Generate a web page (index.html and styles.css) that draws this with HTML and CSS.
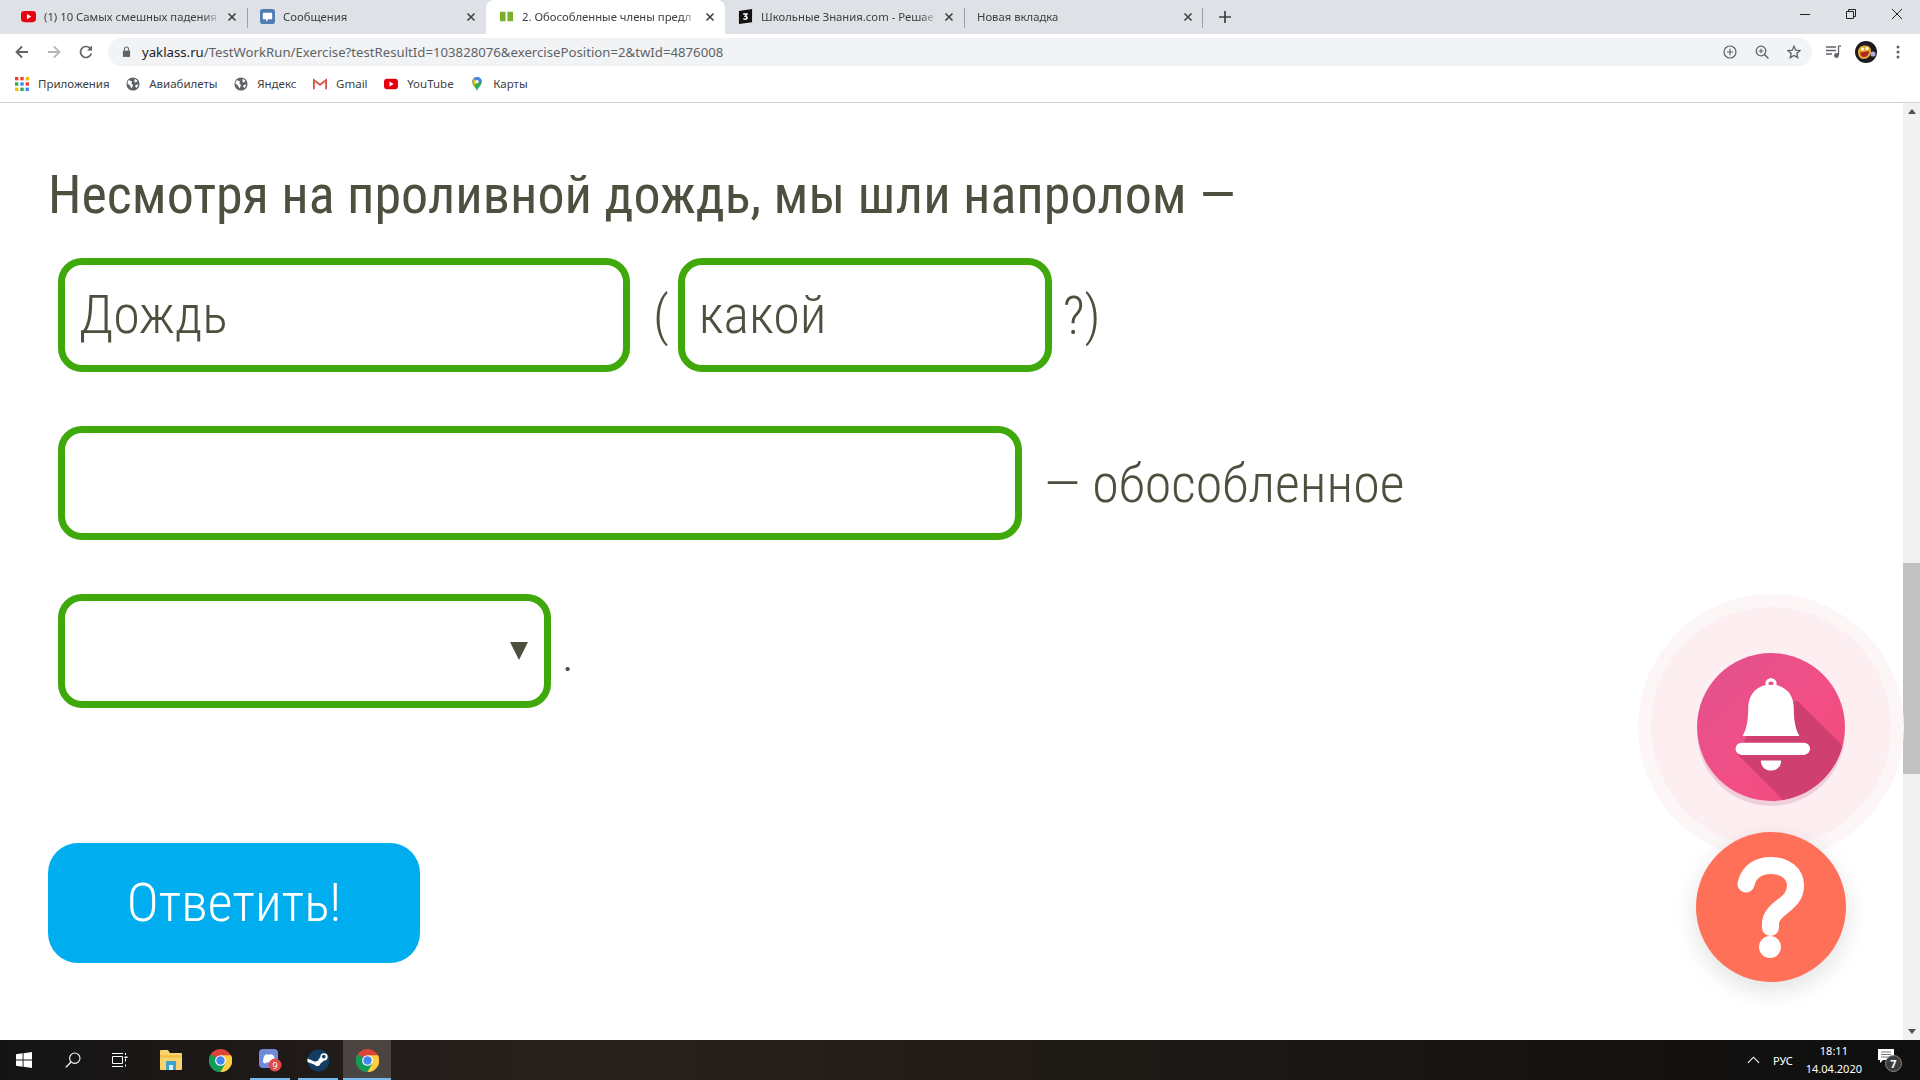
FILE: index.html
```html
<!DOCTYPE html>
<html>
<head>
  <title>Обособленные члены предложения</title>
  <link rel="stylesheet" href="styles.css">
</head>
<body>
  <svg class="defs" width="0" height="0">
    <symbol id="chrome" viewBox="0 0 24 24">
      <circle cx="12" cy="12" r="12" fill="#db4437"/>
      <path d="M12 12 1.6 18A12 12 0 0 1 2 5.4Z" fill="#0f9d58"/>
      <path d="M12 12 22.4 18A12 12 0 0 1 1.6 18L6 10Z" fill="#0f9d58"/>
      <path d="M12 6.5H23A12 12 0 0 1 12 24L17 15Z" fill="#ffcd40"/>
      <circle cx="12" cy="12" r="5.6" fill="#fff"/>
      <circle cx="12" cy="12" r="4.4" fill="#4285f4"/>
    </symbol>
    <symbol id="globe" viewBox="0 0 16 16">
      <circle cx="8" cy="8" r="7.5" fill="#5f6368"/>
      <path d="M3 3.5 7 5 6 7 8 9 6.5 13 4 9 1.5 7.5ZM10 2l3 2-1.500 2.500L9.500 5ZM11 9l3.500-.5-2.500 4L10.500 11Z" fill="#fff"/>
    </symbol>
    <symbol id="yt" viewBox="0 0 16 16">
      <rect x="0" y="2" width="16" height="12" rx="3.500" fill="#e60012"/>
      <path d="M6.300 5.200 11 8l-4.700 2.800Z" fill="#fff"/>
    </symbol>
    <symbol id="x" viewBox="0 0 10 10">
      <path d="M1.500 1.500l7 7M8.500 1.500l-7 7" stroke="#3c4043" stroke-width="1.600"/>
    </symbol>
  </svg>

  <div class="tabstrip">
    <div class="tab">
      <svg class="fav" viewBox="0 0 16 16"><use href="#yt"/></svg>
      <span class="tab-title">(1) 10 Самых смешных падения</span>
      <svg class="tab-close" viewBox="0 0 10 10"><use href="#x"/></svg>
    </div>
    <div class="tab sep">
      <svg class="fav" viewBox="0 0 16 16"><rect width="16" height="16" rx="3" fill="#4f7db4"/><path d="M4 4h8a1 1 0 0 1 1 1v5a1 1 0 0 1-1 1H9l-2.500 2.500V11H4a1 1 0 0 1-1-1V5a1 1 0 0 1 1-1Z" fill="#fff"/></svg>
      <span class="tab-title">Сообщения</span>
      <svg class="tab-close" viewBox="0 0 10 10"><use href="#x"/></svg>
    </div>
    <div class="tab active">
      <svg class="fav" viewBox="0 0 16 16"><path d="M1 3h6v10H1ZM9 3h6v10H9Z" fill="#7cb02c"/></svg>
      <span class="tab-title">2. Обособленные члены предл</span>
      <svg class="tab-close" viewBox="0 0 10 10"><use href="#x"/></svg>
    </div>
    <div class="tab">
      <svg class="fav" viewBox="0 0 16 16"><path d="M1 2 15 0v14L1 16Z" fill="#111"/><path d="M5.500 4.500h4.800v1.500L8.600 7.400c1.200.2 1.900.9 1.900 2 0 1.500-1.300 2.300-2.700 2.300-1 0-1.800-.3-2.500-.8l.7-1.300c.5.400 1.100.6 1.700.6.600 0 1-.3 1-.8s-.5-.8-1.200-.8H6.700V7.400l1.500-1.400H5.500Z" fill="#fff"/></svg>
      <span class="tab-title">Школьные Знания.com - Решае</span>
      <svg class="tab-close" viewBox="0 0 10 10"><use href="#x"/></svg>
    </div>
    <div class="tab sep last">
      <span class="tab-title">Новая вкладка</span>
      <svg class="tab-close" viewBox="0 0 10 10"><use href="#x"/></svg>
    </div>
    <svg class="newtab" viewBox="0 0 12 12"><path d="M6 0v12M0 6h12" stroke="#3c4043" stroke-width="1.700"/></svg>
    <div class="winctl">
      <svg viewBox="0 0 12 12"><path d="M1 6.500h10" stroke="#222" stroke-width="1"/></svg>
      <svg viewBox="0 0 12 12"><path d="M3.500 3V1.500h7v7H9M1.500 3.500h7v7h-7Z" fill="none" stroke="#222" stroke-width="1"/></svg>
      <svg viewBox="0 0 12 12"><path d="M1 1l10 10M11 1 1 11" stroke="#222" stroke-width="1"/></svg>
    </div>
  </div>

  <div class="toolbar">
    <svg class="nav-icon" viewBox="0 0 16 16"><path d="M14 8H3M8 2.500 2.500 8 8 13.500" fill="none" stroke="#5f6368" stroke-width="1.800"/></svg>
    <svg class="nav-icon" viewBox="0 0 16 16"><path d="M2 8h11M8 2.500 13.500 8 8 13.500" fill="none" stroke="#b4b7bb" stroke-width="1.800"/></svg>
    <svg class="nav-icon" viewBox="0 0 16 16"><path d="M13.300 9.500A5.500 5.500 0 1 1 12 4.200" fill="none" stroke="#5f6368" stroke-width="1.700"/><path d="M14 1.500V6.500H9Z" fill="#5f6368"/></svg>
    <div class="omnibox">
      <svg class="lock" viewBox="0 0 10 12"><path d="M1 5h8v7H1Z" fill="#5f6368"/><path d="M2.800 5V3.200a2.200 2.200 0 0 1 4.400 0V5" fill="none" stroke="#5f6368" stroke-width="1.200"/></svg>
      <span class="url"><b>yaklass.ru</b>/TestWorkRun/Exercise?testResultId=103828076&amp;exercisePosition=2&amp;twId=4876008</span>
      <div class="omni-icons">
        <svg viewBox="0 0 14 14"><circle cx="7" cy="7" r="6" fill="none" stroke="#5f6368" stroke-width="1.200"/><path d="M7 3.800v6.400M3.800 7h6.400" stroke="#5f6368" stroke-width="1.200"/></svg>
        <svg viewBox="0 0 14 14"><circle cx="6" cy="6" r="4.800" fill="none" stroke="#5f6368" stroke-width="1.300"/><path d="M9.500 9.500 13.500 13.500" stroke="#5f6368" stroke-width="1.500"/><path d="M6 3.700v4.600M3.700 6h4.600" stroke="#5f6368" stroke-width="1.100"/></svg>
        <svg viewBox="0 0 14 14"><path d="M7 1.300 8.700 5.200 13 5.600 9.800 8.400 10.700 12.600 7 10.400 3.300 12.600 4.200 8.400 1 5.600 5.300 5.200Z" fill="none" stroke="#5f6368" stroke-width="1.300"/></svg>
      </div>
    </div>
    <svg class="media" viewBox="0 0 16 14"><path d="M0 2h10M0 5.500h10M0 9h6" stroke="#5f6368" stroke-width="1.300"/><path d="M12.500 1v9" stroke="#5f6368" stroke-width="1.300"/><path d="M12.500 1H15" stroke="#5f6368" stroke-width="1.300"/><circle cx="10.500" cy="10.500" r="2.400" fill="#5f6368"/></svg>
    <svg class="avatar" viewBox="0 0 22 22">
      <circle cx="11" cy="11" r="11" fill="#1d1a24"/>
      <path d="M3 11C3 6 7 4 11 4.500 15 5 16.500 8 16 11 15.500 15 13 18 8.500 18 5 18 3 15 3 11Z" fill="#e3a92a"/>
      <path d="M5 11.500 14 10C14 14 11.500 16 8.500 16 6.500 16 5.500 14 5 11.500Z" fill="#b0281e"/>
      <circle cx="7.500" cy="8" r="1.500" fill="#fff"/><circle cx="12" cy="7.500" r="1.500" fill="#fff"/>
      <circle cx="18" cy="13" r="2.600" fill="#b9a8d8"/>
    </svg>
    <svg class="dots" viewBox="0 0 4 14"><circle cx="2" cy="2" r="1.500" fill="#5f6368"/><circle cx="2" cy="7" r="1.500" fill="#5f6368"/><circle cx="2" cy="12" r="1.500" fill="#5f6368"/></svg>
  </div>

  <div class="bookmarks">
    <div class="bm">
      <svg class="bm-icon" viewBox="0 0 14 14">
        <rect x="0" y="0" width="3.400" height="3.400" fill="#ea4335"/><rect x="5.300" y="0" width="3.400" height="3.400" fill="#ea4335"/><rect x="10.600" y="0" width="3.400" height="3.400" fill="#fbbc05"/>
        <rect x="0" y="5.300" width="3.400" height="3.400" fill="#34a853"/><rect x="5.300" y="5.300" width="3.400" height="3.400" fill="#4285f4"/><rect x="10.600" y="5.300" width="3.400" height="3.400" fill="#ea4335"/>
        <rect x="0" y="10.600" width="3.400" height="3.400" fill="#fbbc05"/><rect x="5.300" y="10.600" width="3.400" height="3.400" fill="#34a853"/><rect x="10.600" y="10.600" width="3.400" height="3.400" fill="#4285f4"/>
      </svg>
      Приложения
    </div>
    <div class="bm"><svg class="bm-icon" viewBox="0 0 16 16"><use href="#globe"/></svg>Авиабилеты</div>
    <div class="bm"><svg class="bm-icon" viewBox="0 0 16 16"><use href="#globe"/></svg>Яндекс</div>
    <div class="bm"><svg class="bm-icon" viewBox="0 0 16 12"><path d="M1 12V1.500L8 7l7-5.500V12" fill="none" stroke="#d4574a" stroke-width="2.200"/></svg>Gmail</div>
    <div class="bm"><svg class="bm-icon" viewBox="0 0 16 16"><use href="#yt"/></svg>YouTube</div>
    <div class="bm"><svg class="bm-icon" viewBox="0 0 12 16"><path d="M6 0a5.500 5.500 0 0 1 5.500 5.500C11.500 9.500 7.500 11.500 6 16 4.500 11.500.5 9.500.5 5.500A5.500 5.500 0 0 1 6 0Z" fill="#34a853"/><path d="M6 0a5.500 5.500 0 0 1 5.500 5.500H.5A5.500 5.500 0 0 1 6 0Z" fill="#4285f4"/><path d="M.5 5.500 3 2 6 5.500 3.500 10Z" fill="#fbbc05"/><circle cx="6" cy="5.500" r="2" fill="#fff"/></svg>Карты</div>
  </div>

  <div class="page">
    <div class="content">
      <div class="question">Несмотря на проливной дождь, мы шли напролом —</div>

      <div class="row">
        <div class="field w-subject">Дождь</div>
        <span class="word paren">(</span>
        <div class="field w-what">какой</div>
        <span class="word">?)</span>
      </div>

      <div class="row">
        <div class="field w-wide"></div>
        <span class="word dash">— обособленное</span>
      </div>

      <div class="row">
        <div class="field w-select"><span class="arrow"></span></div>
        <span class="word dot">.</span>
      </div>

      <div class="answer">Ответить!</div>
    </div>

    <div class="scrollbar">
      <span class="sb-up"></span>
      <div class="sb-track"><div class="sb-thumb"></div></div>
      <span class="sb-down"></span>
    </div>

    <div class="fab-bell">
      <svg viewBox="0 0 146 146" width="148" height="148">
        <defs><clipPath id="bellclip"><circle cx="73" cy="73" r="73"/></clipPath></defs>
        <g clip-path="url(#bellclip)">
          <path d="M60 60 99 47 147 95V146H86L40 100Z" fill="#cf3f6f"/>
        </g>
        <path d="M73 25c-3 0-5.500 2.200-5.500 5 0 .6.100 1.100.3 1.600C56 34.500 50.500 43 50.500 55c0 11-1.500 20-5.500 27h56c-4-7-5.500-16-5.500-27 0-12-5.500-20.500-17.300-23.400.2-.5.300-1 .3-1.600 0-2.800-2.500-5-5.500-5Zm0 3c1.500 0 2.500.8 2.500 2s-1 1.500-2.500 1.500-2.500-.3-2.500-1.500 1-2 2.500-2Z" fill="#fff" fill-rule="evenodd"/>
        <rect x="38" y="88.500" width="73.500" height="12" rx="6" fill="#fff"/>
        <path d="M63 106h20c0 6-4 10-10 10s-10-4-10-10Z" fill="#fff"/>
      </svg>
    </div>
    <div class="fab-help">
      <svg viewBox="0 0 150 150" width="150" height="150">
        <path d="M50 52C53 39 63 33.500 75 33.500c14 0 24.500 8 24.500 20 0 11-7 16-13 21-7 5-12 10-12 17v4" fill="none" stroke="#fff" stroke-width="17" stroke-linecap="round" stroke-linejoin="round"/>
        <circle cx="74" cy="115" r="11" fill="#fff"/>
      </svg>
    </div>
  </div>

  <div class="taskbar">
    <svg class="tb-start" viewBox="0 0 16 16"><path d="M0 2.300 6.600 1.300V7.600H0ZM7.500 1.200 16 0V7.600H7.500ZM0 8.400H6.600V14.700L0 13.700ZM7.500 8.400H16V16L7.500 14.800Z" fill="#fff"/></svg>
    <svg class="tb-search" viewBox="0 0 16 16"><circle cx="9.800" cy="6.200" r="5.200" fill="none" stroke="#fff" stroke-width="1.100"/><path d="M6 10 .8 15.400" stroke="#fff" stroke-width="1.300"/></svg>
    <svg class="tb-tasks" viewBox="0 0 16 16"><path d="M.5 4.500h10v7H.5ZM0 1.500h11M0 14.500h11M13.500 1v2M13.500 6.500v3M13.500 12.500v2" fill="none" stroke="#fff" stroke-width="1"/><rect x="12.500" y="4.500" width="3" height="1.500" fill="#fff"/></svg>
    <div class="tb-app first">
      <svg viewBox="0 0 22 20" width="22" height="20"><path d="M0 1a1 1 0 0 1 1-1h7l2 3h11a1 1 0 0 1 1 1v15a1 1 0 0 1-1 1H1a1 1 0 0 1-1-1Z" fill="#fbd36e"/><path d="M0 5h22v3H0Z" fill="#f5c24d"/><path d="M6 11h10v9H6Z" fill="#3aa5c8"/><path d="M9 15h4v5H9Z" fill="#d9eef5"/></svg>
    </div>
    <div class="tb-app"><svg viewBox="0 0 24 24" width="23" height="23"><use href="#chrome"/></svg></div>
    <div class="tb-app running discord">
      <svg viewBox="0 0 24 24" width="24" height="24"><rect x="1" y="1" width="19" height="19" rx="4" fill="#7289da"/><path d="M5 14c0-4 1-6 2-7 2-1 3-.8 3.500-.3h1c.5-.5 1.500-.7 3.500.3 1 1 2 3 2 7-1 1-2.500 1.500-3.500 1.500L13 14.500H8l-.5 1C6.500 15.500 6 15 5 14Z" fill="#fff"/><circle cx="17" cy="17" r="6.500" fill="#e04a4a"/><text x="17" y="20.500" class="badge-num">9</text></svg>
    </div>
    <div class="tb-app running">
      <svg viewBox="0 0 24 24" width="23" height="23"><circle cx="12" cy="12" r="11.500" fill="#143c63"/><path d="M.5 13.500 8 16.500a3.300 3.300 0 0 0 6-1.500l4-3a3.800 3.800 0 1 0-4-4L11 12.500a3.300 3.300 0 0 0-2.500.7L.5 10Z" fill="#fff"/><circle cx="17.500" cy="8" r="1.900" fill="#143c63"/></svg>
    </div>
    <div class="tb-app active"><svg viewBox="0 0 24 24" width="23" height="23"><use href="#chrome"/></svg></div>
    <div class="tray">
      <svg class="tray-up" viewBox="0 0 14 8"><path d="M1 7 7 1l6 6" fill="none" stroke="#fff" stroke-width="1.200"/></svg>
      <span class="tray-lang">РУС</span>
      <div class="tray-clock"><span>18:11</span><span>14.04.2020</span></div>
      <div class="tray-notif">
        <svg viewBox="0 0 16 14" width="16" height="14"><path d="M0 0h16v11H5l-3 3v-3H0Z" fill="#fff"/><path d="M3 3h10M3 5.500h10M3 8h10" stroke="#555" stroke-width=".8"/></svg>
        <span class="notif-badge">7</span>
      </div>
    </div>
  </div>
</body>
</html>
```

FILE: styles.css
```css
* {
  box-sizing: border-box;
}

html, body {
  height: 100%;
}

body {
  margin: 0;
  width: 1920px;
  height: 1080px;
  overflow: hidden;
  background: #fff;
  font-family: 'Noto Sans', sans-serif;
  display: flex;
  flex-direction: column;
}

.defs {
  position: absolute;
}

/* tabs */
.tabstrip {
  height: 34px;
  flex: none;
  background: #dee1e6;
  display: flex;
  align-items: stretch;
  padding-left: 8px;
}

.tab {
  width: 239px;
  display: flex;
  align-items: center;
  padding: 0 7px 1px 13px;
  font-size: 11.300px;
  color: #3c4043;
  position: relative;
}

.tab.sep::before {
  content: "";
  width: 1px;
  height: 20px;
  background: #9aa0a6;
  position: absolute;
  left: 0;
  top: 8px;
}

.tab.last::after {
  content: "";
  width: 1px;
  height: 20px;
  background: #9aa0a6;
  position: absolute;
  right: 0;
  top: 8px;
}

.tab.active {
  background: #fff;
  border-radius: 8px 8px 0 0;
}

.fav {
  width: 15px;
  height: 15px;
  margin-right: 8px;
  flex: none;
}

.tab-title {
  flex: 1;
  white-space: nowrap;
  overflow: hidden;
  -webkit-mask-image: linear-gradient(to right, #000 calc(100% - 16px), transparent);
  mask-image: linear-gradient(to right, #000 calc(100% - 16px), transparent);
}

.tab-close {
  flex: none;
  width: 10px;
  height: 10px;
  margin: 0 3px 0 7px;
}

.newtab {
  width: 12px;
  height: 12px;
  margin: 11px 0 0 16px;
}

.winctl {
  margin-left: auto;
  display: flex;
  align-items: flex-start;
}

.winctl svg {
  width: 12px;
  height: 12px;
  margin: 8px 17px 0;
}

/* toolbar */
.toolbar {
  height: 35px;
  flex: none;
  background: #fff;
  display: flex;
  align-items: center;
  padding-left: 14px;
}

.nav-icon {
  width: 16px;
  height: 16px;
  margin-right: 16px;
}

.omnibox {
  width: 1704px;
  height: 28px;
  margin-left: -2px;
  border-radius: 14px;
  background: #f1f3f4;
  display: flex;
  align-items: center;
  padding-left: 14px;
  font-size: 13.200px;
  color: #5f6368;
}

.lock {
  width: 9px;
  height: 11px;
  margin-right: 11px;
}

.url b {
  font-weight: 400;
  color: #202124;
}

.omni-icons {
  margin-left: auto;
  display: flex;
  gap: 18px;
  padding-right: 11px;
}

.omni-icons svg {
  width: 14px;
  height: 14px;
}

.media {
  width: 16px;
  height: 14px;
  margin-left: 14px;
}

.avatar {
  width: 22px;
  height: 22px;
  margin-left: 13px;
}

.dots {
  width: 4px;
  height: 14px;
  margin-left: 19px;
}

/* bookmarks */
.bookmarks {
  height: 34px;
  flex: none;
  background: #fff;
  border-bottom: 1px solid #d0d2d5;
  display: flex;
  align-items: center;
  padding: 0 0 4px 15px;
  gap: 16.600px;
  font-size: 11.500px;
  color: #3c4043;
}

.bm {
  display: flex;
  align-items: center;
}

.bm-icon {
  width: 14px;
  height: 14px;
  margin-right: 9px;
}

/* page */
.page {
  flex: 1;
  display: flex;
  position: relative;
  min-height: 0;
}

.content {
  flex: 1;
  padding: 62px 0 0 48px;
  font-family: Roboto, sans-serif;
  font-stretch: 75%;
  font-size: 54px;
  color: #4f4f3f;
}

.question {
  line-height: 60px;
  margin-bottom: 33px;
  white-space: nowrap;
}

.row {
  display: flex;
  align-items: center;
  height: 114px;
  padding-left: 10px;
  margin-bottom: 54px;
  font-weight: 300;
  white-space: nowrap;
}

.field {
  height: 114px;
  border: 7px solid #3fa90c;
  border-radius: 24px;
  padding: 0 0 2px 14px;
  display: flex;
  align-items: center;
  position: relative;
}

.w-subject { width: 572px; }
.w-what { width: 374px; }
.w-wide { width: 964px; }
.w-select { width: 493px; }

.word {
  margin-left: 11px;
}

.word.paren {
  margin: 0 9px 0 23px;
}

.dash {
  margin-left: 22px;
}

.dot {
  margin-left: 12px;
  font-weight: 400;
  font-size: 36px;
  padding-top: 16px;
}

.arrow {
  position: absolute;
  right: 16px;
  top: 41px;
  width: 0;
  height: 0;
  border-left: 9px solid transparent;
  border-right: 9px solid transparent;
  border-top: 18px solid #4f4f3f;
}

.answer {
  width: 372px;
  height: 120px;
  margin-top: 135px;
  padding-bottom: 2px;
  background: #00aeef;
  border-radius: 30px;
  color: #fff;
  font-weight: 300;
  font-size: 54px;
  display: flex;
  align-items: center;
  justify-content: center;
}

/* page scrollbar */
.scrollbar {
  width: 17px;
  flex: none;
  background: #f1f1f1;
  display: flex;
  flex-direction: column;
  align-items: center;
}

.sb-up, .sb-down {
  flex: none;
  width: 0;
  height: 5px;
  margin: 6px 0;
  border-left: 4px solid transparent;
  border-right: 4px solid transparent;
}

.sb-up {
  border-bottom: 5px solid #505050;
}

.sb-down {
  border-top: 5px solid #505050;
}

.sb-track {
  flex: 1;
  width: 100%;
  padding-top: 443px;
}

.sb-thumb {
  height: 211px;
  background: #c1c1c1;
}

/* floating buttons */
.fab-bell {
  position: absolute;
  left: 1697px;
  top: 550px;
  width: 148px;
  height: 148px;
  border-radius: 50%;
  background: linear-gradient(135deg, #e0528e, #f24f86 55%, #ee4878);
  box-shadow: 0 5px 0 #f0cfdc, 0 0 0 46px #fceef1, 0 0 0 59px #fdf6f7;
}

.fab-help {
  position: absolute;
  left: 1696px;
  top: 729px;
  width: 150px;
  height: 150px;
  border-radius: 50%;
  background: #ff7058;
  box-shadow: 0 8px 24px rgba(0, 0, 0, 0.12);
}

/* windows taskbar */
.taskbar {
  height: 40px;
  flex: none;
  background: linear-gradient(to right, #141414, #231c1a 20%, #2a211c 30%, #1d1915 60%, #0f0f0f);
  display: flex;
  align-items: center;
  padding-left: 16px;
  color: #fff;
}

.tb-start {
  width: 16px;
  height: 16px;
}

.tb-search {
  width: 16px;
  height: 16px;
  margin-left: 33px;
}

.tb-tasks {
  width: 16px;
  height: 16px;
  margin-left: 31px;
}

.tb-app {
  width: 48px;
  height: 40px;
  display: flex;
  align-items: center;
  justify-content: center;
  position: relative;
}

.tb-app.first {
  margin-left: 19px;
  margin-right: 1px;
}

.tb-app.discord {
  margin-left: 2px;
}

.tb-app.running::after, .tb-app.active::after {
  content: "";
  position: absolute;
  left: 4px;
  right: 4px;
  bottom: 0;
  height: 2px;
  background: #76b9ed;
}

.tb-app.active {
  margin-left: 1px;
  background: #4a4541;
}

.tb-app.active::after {
  left: 0;
  right: 0;
}

.badge-num {
  font-family: 'Noto Sans', sans-serif;
  font-size: 9px;
  fill: #fff;
  text-anchor: middle;
}

.tray {
  margin-left: auto;
  display: flex;
  align-items: center;
  font-size: 11px;
  padding-right: 16px;
}

.tray-up {
  width: 13px;
  height: 8px;
}

.tray-lang {
  margin-left: 13px;
}

.tray-clock {
  display: flex;
  flex-direction: column;
  align-items: center;
  line-height: 18px;
  margin-left: 13px;
}

.tray-notif {
  width: 26px;
  height: 28px;
  margin-left: 16px;
  padding-top: 3px;
  position: relative;
}

.notif-badge {
  position: absolute;
  left: 7px;
  top: 9px;
  width: 17px;
  height: 17px;
  border-radius: 50%;
  background: #3c3c3c;
  border: 1px solid #888;
  font-size: 11px;
  font-weight: 700;
  line-height: 15px;
  text-align: center;
}
```
